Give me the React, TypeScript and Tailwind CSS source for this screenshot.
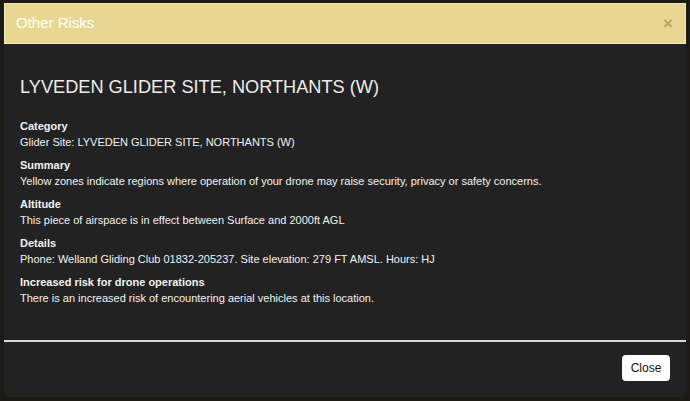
import React from 'react';

const SECTIONS = [
  { label: 'Category', text: 'Glider Site: LYVEDEN GLIDER SITE, NORTHANTS (W)' },
  { label: 'Summary', text: 'Yellow zones indicate regions where operation of your drone may raise security, privacy or safety concerns.' },
  { label: 'Altitude', text: 'This piece of airspace is in effect between Surface and 2000ft AGL' },
  { label: 'Details', text: 'Phone: Welland Gliding Club 01832-205237. Site elevation: 279 FT AMSL. Hours: HJ' },
  { label: 'Increased risk for drone operations', text: 'There is an increased risk of encountering aerial vehicles at this location.' },
];

export default function App() {
  return (
    <div className="w-[690px] h-[401px] overflow-hidden bg-[#1c1a14] pt-[3px] pl-[4px] font-['Liberation_Sans',Arial,sans-serif]">
      <div className="w-[682px] h-[394px] bg-[#222222] rounded-b-md flex flex-col">
        {/* Header */}
        <div className="h-[41px] bg-[#e8d793] border border-[#f4ebbd] flex items-center justify-between pl-[11px] pr-[12px]">
          <span className="text-white text-[15px] font-medium">Other Risks</span>
          <span className="text-[#b4a865] text-[17px] leading-none font-bold">×</span>
        </div>

        {/* Body */}
        <div className="flex-1 px-[16px] pt-[31px]">
          <h1 className="text-[#ededed] text-[18.2px] leading-[24px] mb-[20px]">LYVEDEN GLIDER SITE, NORTHANTS (W)</h1>
          <div className="flex flex-col gap-[8px]">
            {SECTIONS.map(s => (
              <div key={s.label} className="text-[11px] leading-[15.5px] text-[#f2f2f2]">
                <div className="font-bold">{s.label}</div>
                <div>{s.text}</div>
              </div>
            ))}
          </div>
        </div>

        {/* Footer */}
        <div className="h-[2px] bg-[#d8d8d8]" />
        <div className="h-[55px] flex items-center justify-end pr-[16px] pb-[3px]">
          <button className="bg-white text-[#111] text-[12px] w-[48px] h-[26px] rounded-[4px]">Close</button>
        </div>
      </div>
    </div>
  );
}
